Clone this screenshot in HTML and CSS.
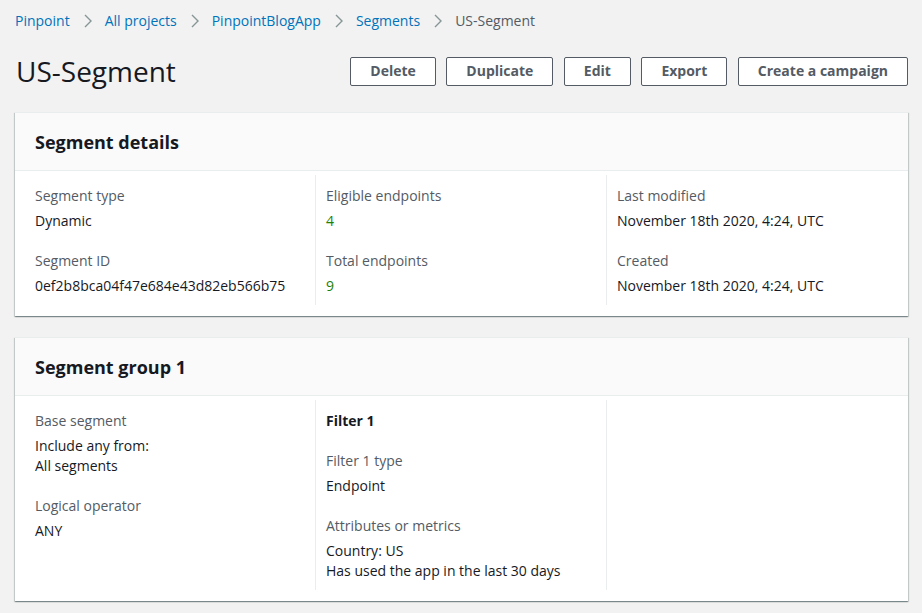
FILE: index.html
```html
<!DOCTYPE html>
<html lang="en">
<head>
<meta charset="utf-8">
<title>US-Segment</title>
<link rel="stylesheet" href="styles.css">
</head>
<body>
<div class="page">
  <nav class="crumbs">
    <a class="crumb">Pinpoint</a>
    <svg class="sep" viewBox="0 0 10 16" width="10" height="16"><polyline points="2,2 8,8 2,14" /></svg>
    <a class="crumb">All projects</a>
    <svg class="sep" viewBox="0 0 10 16" width="10" height="16"><polyline points="2,2 8,8 2,14" /></svg>
    <a class="crumb">PinpointBlogApp</a>
    <svg class="sep" viewBox="0 0 10 16" width="10" height="16"><polyline points="2,2 8,8 2,14" /></svg>
    <a class="crumb">Segments</a>
    <svg class="sep" viewBox="0 0 10 16" width="10" height="16"><polyline points="2,2 8,8 2,14" /></svg>
    <span class="crumb current">US-Segment</span>
  </nav>

  <header class="title-row">
    <h1 class="title">US-Segment</h1>
    <div class="actions">
      <button class="btn">Delete</button>
      <button class="btn">Duplicate</button>
      <button class="btn">Edit</button>
      <button class="btn">Export</button>
      <button class="btn">Create a campaign</button>
    </div>
  </header>

  <section class="panel">
    <div class="panel-head"><h2>Segment details</h2></div>
    <div class="panel-body">
      <div class="col">
        <div class="field">
          <div class="label">Segment type</div>
          <div class="value">Dynamic</div>
        </div>
        <div class="field">
          <div class="label">Segment ID</div>
          <div class="value">0ef2b8bca04f47e684e43d82eb566b75</div>
        </div>
      </div>
      <div class="col">
        <div class="field">
          <div class="label">Eligible endpoints</div>
          <div class="value green">4</div>
        </div>
        <div class="field">
          <div class="label">Total endpoints</div>
          <div class="value green">9</div>
        </div>
      </div>
      <div class="col">
        <div class="field">
          <div class="label">Last modified</div>
          <div class="value">November 18th 2020, 4:24, UTC</div>
        </div>
        <div class="field">
          <div class="label">Created</div>
          <div class="value">November 18th 2020, 4:24, UTC</div>
        </div>
      </div>
    </div>
  </section>

  <section class="panel">
    <div class="panel-head"><h2>Segment group 1</h2></div>
    <div class="panel-body">
      <div class="col">
        <div class="field">
          <div class="label">Base segment</div>
          <div class="value">Include any from:<br>All segments</div>
        </div>
        <div class="field">
          <div class="label">Logical operator</div>
          <div class="value">ANY</div>
        </div>
      </div>
      <div class="col">
        <div class="field">
          <div class="label strong">Filter 1</div>
        </div>
        <div class="field">
          <div class="label">Filter 1 type</div>
          <div class="value">Endpoint</div>
        </div>
        <div class="field">
          <div class="label">Attributes or metrics</div>
          <div class="value">Country: US<br>Has used the app in the last 30 days</div>
        </div>
      </div>
      <div class="col"></div>
    </div>
  </section>
</div>
</body>
</html>
```

FILE: styles.css
```css
* { box-sizing: border-box; }

html, body {
  margin: 0;
  padding: 0;
  background: #f2f2f2;
}

body {
  font-family: "Open Sans", "Noto Sans", Arial, sans-serif;
  font-size: 14px;
  line-height: 20px;
  color: #16191f;
}

.page {
  padding: 11px 14px 12px 15px;
}

.crumbs {
  display: flex;
  align-items: center;
  height: 20px;
}

.crumb {
  color: #0073bb;
  text-decoration: none;
  white-space: nowrap;
}

.crumb.current {
  color: #545b64;
}

.sep {
  margin: 0 12px 0 13px;
  fill: none;
  stroke: #879596;
  stroke-width: 1.4;
}

.title-row {
  display: flex;
  align-items: center;
  justify-content: space-between;
  margin-top: 15px;
  height: 50px;
}

.title {
  margin: 0;
  font-size: 28px;
  line-height: 36px;
  font-weight: 400;
  color: #16191f;
  padding-left: 1px;
}

.actions {
  display: flex;
  gap: 10.5px;
}

.btn {
  font-family: inherit;
  font-size: 14px;
  font-weight: 700;
  line-height: 20px;
  color: #545b64;
  background: #fff;
  border: 1px solid #545b64;
  border-radius: 2px;
  padding: 3px 19px 4px;
  height: 29px;
  cursor: pointer;
}

.panel {
  margin-top: 21px;
  background: #fff;
  box-shadow: 0 1px 1px 0 rgba(0, 28, 36, 0.3), 1px 1px 1px 0 rgba(0, 28, 36, 0.15), -1px 1px 1px 0 rgba(0, 28, 36, 0.15);
  border-top: 1px solid #eaeded;
}

.panel:first-of-type {
  margin-top: 16px;
}

.panel-head {
  background: #fafafa;
  border-bottom: 1px solid #eaeded;
  padding: 18px 20px 17px;
}

.panel-head h2 {
  margin: 0;
  font-size: 18px;
  line-height: 22px;
  font-weight: 700;
  color: #16191f;
}

.panel-body {
  display: grid;
  grid-template-columns: 280px 1fr 1fr;
  padding: 4px 11px 11px 20px;
}

.col {
  display: flex;
  flex-direction: column;
  gap: 20px;
  padding: 11px 0 9px;
}

.col + .col {
  border-left: 1px solid #eaeded;
  padding-left: 10px;
}

.label {
  color: #545b64;
}

.label.strong {
  color: #16191f;
  font-weight: 700;
}

.value {
  margin-top: 5px;
  color: #16191f;
}

.value.green {
  color: #1d8102;
}
```
